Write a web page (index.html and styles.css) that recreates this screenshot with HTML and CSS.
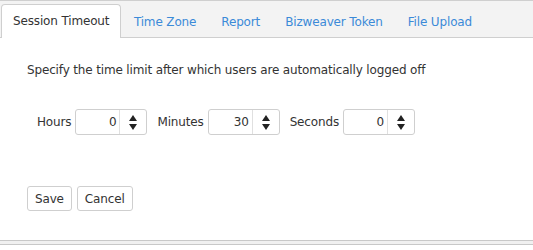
FILE: index.html
```html
<!DOCTYPE html>
<html>
<head>
<meta charset="utf-8">
<link rel="stylesheet" href="styles.css">
</head>
<body>
<div class="tabs">
  <div class="tab active">Session Timeout</div>
  <div class="tab">Time Zone</div>
  <div class="tab">Report</div>
  <div class="tab">Bizweaver Token</div>
  <div class="tab">File Upload</div>
</div>
<div class="panel">
  <p class="desc">Specify the time limit after which users are automatically logged off</p>
  <div class="row">
    <label class="lbl">Hours</label>
    <div class="spin"><span class="val">0</span><span class="arrows"><span class="up"></span><span class="down"></span></span></div>
    <label class="lbl">Minutes</label>
    <div class="spin"><span class="val">30</span><span class="arrows"><span class="up"></span><span class="down"></span></span></div>
    <label class="lbl">Seconds</label>
    <div class="spin"><span class="val">0</span><span class="arrows"><span class="up"></span><span class="down"></span></span></div>
  </div>
  <div class="buttons">
    <button class="btn">Save</button>
    <button class="btn">Cancel</button>
  </div>
</div>
<div class="footer"></div>
</body>
</html>
```
FILE: styles.css
```css
html, body { margin: 0; padding: 0; background: #fff; }
body { font-family: "DejaVu Sans", Verdana, sans-serif; font-size: 12px; letter-spacing: -0.15px; color: #333; width: 533px; height: 250px; overflow: hidden; }
.tabs { display: flex; align-items: flex-end; height: 36px; background: #f3f3f3; border-top: 1px solid #cfcfcf; border-bottom: 1px solid #cfcfcf; padding-left: 1px; box-sizing: content-box; }
.tab { padding: 0 11.5px; height: 32px; line-height: 32px; color: #3b8ad8; margin-bottom: -1px; border: 1px solid transparent; border-bottom: none; }
.tab.active { background: #fff; color: #333; border-color: #cfcfcf; border-radius: 4px 4px 0 0; height: 33px; padding: 0 11px; }
.panel { padding: 0 0 0 27px; height: 202px; }
.desc { margin: 0; padding-top: 24px; line-height: 16px; }
.row { display: flex; align-items: center; margin-top: 31px; padding-left: 10px; }
.lbl { margin-right: 4px; }
.spin { display: flex; width: 70px; height: 24px; border: 1px solid #cfcfcf; border-radius: 3px; margin-right: 10px; background: #fff; }
.val { flex: 1; text-align: right; line-height: 24px; padding-right: 3px; }
.arrows { width: 26px; border-left: 1px solid #e0e0e0; display: flex; flex-direction: column; align-items: center; justify-content: center; gap: 3px; }
.up { width: 0; height: 0; border-left: 4px solid transparent; border-right: 4px solid transparent; border-bottom: 6px solid #222; }
.down { width: 0; height: 0; border-left: 4px solid transparent; border-right: 4px solid transparent; border-top: 6px solid #222; }
.buttons { display: flex; gap: 5px; margin-top: 51px; }
.btn { font-family: inherit; font-size: 12px; letter-spacing: -0.15px; color: #333; background: #fff; border: 1px solid #cfcfcf; border-radius: 3px; height: 25px; padding: 0 7px; }
.footer { height: 3px; background: #f0f0f0; border-top: 1px solid #c8c8c8; border-bottom: 1px solid #c8c8c8; }
```
